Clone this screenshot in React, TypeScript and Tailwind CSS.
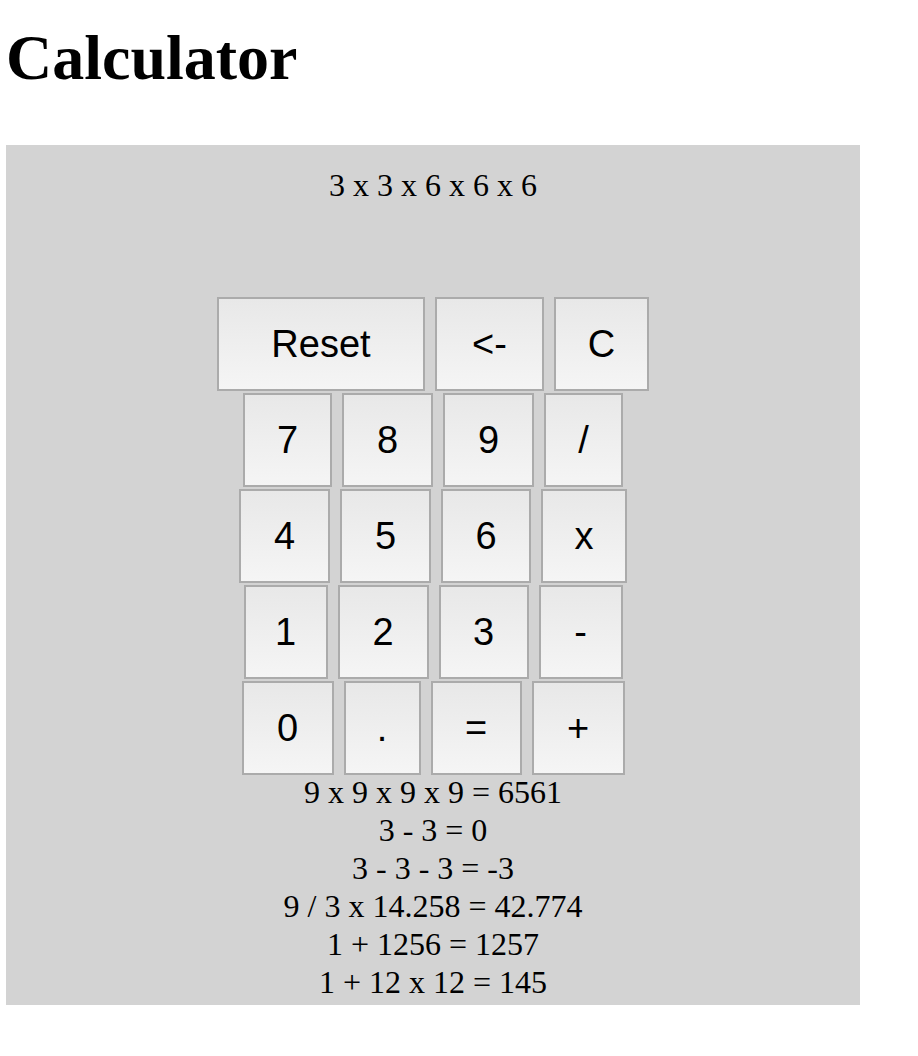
const rows: { label: string; w: number }[][] = [
  [
    { label: 'Reset', w: 208 },
    { label: '<-', w: 109 },
    { label: 'C', w: 95 },
  ],
  [
    { label: '7', w: 89 },
    { label: '8', w: 91 },
    { label: '9', w: 91 },
    { label: '/', w: 79 },
  ],
  [
    { label: '4', w: 91 },
    { label: '5', w: 91 },
    { label: '6', w: 90 },
    { label: 'x', w: 86 },
  ],
  [
    { label: '1', w: 84 },
    { label: '2', w: 91 },
    { label: '3', w: 90 },
    { label: '-', w: 84 },
  ],
  [
    { label: '0', w: 92 },
    { label: '.', w: 77 },
    { label: '=', w: 91 },
    { label: '+', w: 93 },
  ],
];

const history = [
  '9 x 9 x 9 x 9 = 6561',
  '3 - 3 = 0',
  '3 - 3 - 3 = -3',
  '9 / 3 x 14.258 = 42.774',
  '1 + 1256 = 1257',
  '1 + 12 x 12 = 145',
];

export default function App() {
  return (
    <div className="min-h-screen bg-white pl-[6px] pt-[21px] text-black font-['Liberation_Serif',serif]">
      <h1 className="text-[64px] leading-[74px] font-bold">Calculator</h1>

      {/* calculator panel */}
      <div className="mt-[50px] flex h-[860px] w-[854px] flex-col items-center bg-[#d3d3d3] pt-[21px]">
        <div className="text-[32px] leading-[38px]">3 x 3 x 6 x 6 x 6</div>

        <div className="mt-[93px] flex flex-col gap-[2px]">
          {rows.map((row, i) => (
            <div key={i} className="flex justify-center gap-[10px]">
              {row.map((b) => (
                <button
                  key={b.label}
                  style={{ width: b.w }}
                  className="flex h-[94px] items-center justify-center border-2 border-[#ababab] bg-linear-to-b from-[#e8e8e8] to-[#f5f5f5] font-['Liberation_Sans',Arial,sans-serif] text-[38px] text-black"
                >
                  {b.label}
                </button>
              ))}
            </div>
          ))}
        </div>

        <div className="-mt-[2px] flex flex-col items-center text-[32px] leading-[38px]">
          {history.map((h) => (
            <div key={h}>{h}</div>
          ))}
        </div>
      </div>
    </div>
  );
}
